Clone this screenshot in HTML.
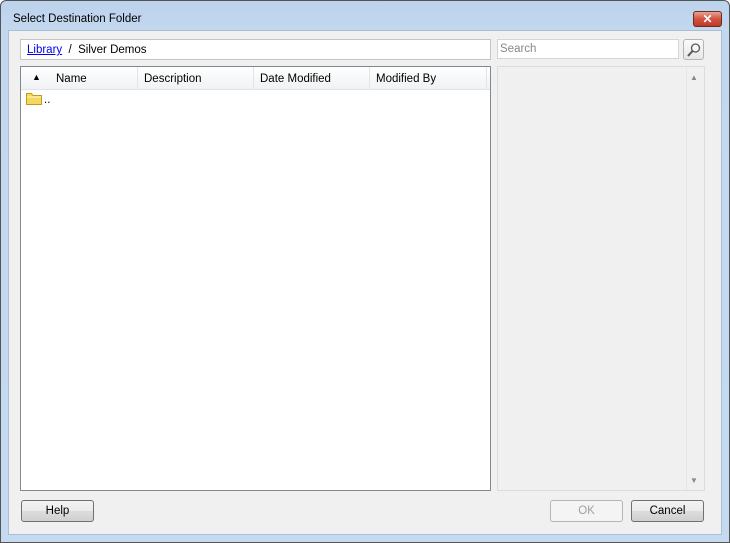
<!DOCTYPE html>
<html><head><style>
*{box-sizing:border-box;margin:0;padding:0}
body{width:730px;height:543px;overflow:hidden;font-family:"Liberation Sans",sans-serif;font-size:11.5px;color:#000;background:#fff}
.win{position:absolute;left:0;top:0;width:730px;height:543px;border:1px solid #555;border-radius:6px 6px 0 0;background:linear-gradient(#bcd3ec,#c3d8ef 30px,#c5daf0);}
.title{position:absolute;left:12px;top:12px;font-size:11.5px;color:#000}
.close{position:absolute;left:692px;top:10px;width:29px;height:16px;border:1px solid #6d2a22;border-radius:3px;background:linear-gradient(#e8a393,#d0533e 50%,#c0392b);color:#fff;font-weight:bold;text-align:center;font-size:12px;line-height:14px}
.client{position:absolute;left:8px;top:30px;width:714px;height:505px;background:#f0f0f0;border:1px solid #a9bfd6}
.abs{position:absolute}
.box{background:#fff;border:1px solid #abadb3}
.btn{position:absolute;height:22px;border:1px solid #707070;border-radius:3px;background:linear-gradient(#f2f2f2,#ebebeb 50%,#dddddd 51%,#cfcfcf);text-align:center;line-height:21px}
.hdr span{position:absolute;top:6px}
.sep{position:absolute;top:0;width:1px;height:22px;background:#e3e4e6}
</style></head><body>
<div class="win">
<div class="title">Select Destination Folder</div>
<div class="close">✕</div>
</div>
<div class="client"></div>
<div class="abs box" style="left:20px;top:39px;width:471px;height:21px;border-color:#c5c5c5"></div>
<div class="abs" style="left:27px;top:44px"><span style="color:#0000ee;text-decoration:underline">Library</span>&nbsp;&nbsp;/&nbsp;&nbsp;Silver Demos</div>
<div class="abs box" style="left:20px;top:66px;width:471px;height:425px;border-color:#828790"></div>
<div class="abs hdr" style="left:21px;top:67px;width:469px;height:23px;background:linear-gradient(#fff,#f7f8f9 50%,#f1f2f4);border-bottom:1px solid #e2e3e5">
<span style="left:11px;top:5px;font-size:9px">▲</span>
<span style="left:35px">Name</span><div class="sep" style="left:116px"></div>
<span style="left:123px">Description</span><div class="sep" style="left:232px"></div>
<span style="left:239px">Date Modified</span><div class="sep" style="left:348px"></div>
<span style="left:355px">Modified By</span><div class="sep" style="left:465px"></div>
</div>
<svg class="abs" style="left:26px;top:92px" width="16" height="13"><path d="M0.5 1.5h5l1.5 2h8.5v9h-15z" fill="#f5d862" stroke="#c49a18"/><path d="M1 5h14" stroke="#fff6c0"/></svg>
<div class="abs" style="left:44px;top:94px">..</div>
<div class="abs box" style="left:497px;top:39px;width:182px;height:20px;border-color:#d5d5d5"></div>
<div class="abs" style="left:500px;top:43px;color:#888">Search</div>
<div class="abs" style="left:683px;top:39px;width:21px;height:21px;border:1px solid #b5b5b5;border-radius:3px;background:linear-gradient(#fbfbfb,#e6e6e6)"></div>
<svg class="abs" style="left:686px;top:42px" width="16" height="16"><circle cx="9.5" cy="6" r="4" fill="#f5f8fb" stroke="#555" stroke-width="1.3"/><path d="M6.5 9l-4.5 5" stroke="#555" stroke-width="2"/></svg>
<div class="abs" style="left:497px;top:66px;width:208px;height:425px;border:1px solid #dcdcdc;background:#f0f0f0"></div>
<div class="abs" style="left:686px;top:67px;width:18px;height:423px;background:#f0f0f0;border-left:1px solid #e6e6e6"></div>
<div class="abs" style="left:690px;top:73px;font-size:8px;color:#888">▲</div>
<div class="abs" style="left:690px;top:476px;font-size:8px;color:#888">▼</div>
<div class="btn" style="left:21px;top:500px;width:73px">Help</div>
<div class="btn" style="left:550px;top:500px;width:73px;border-color:#b5b5b5;background:#f4f4f4;color:#a0a0a0">OK</div>
<div class="btn" style="left:631px;top:500px;width:73px">Cancel</div>
</body></html>
